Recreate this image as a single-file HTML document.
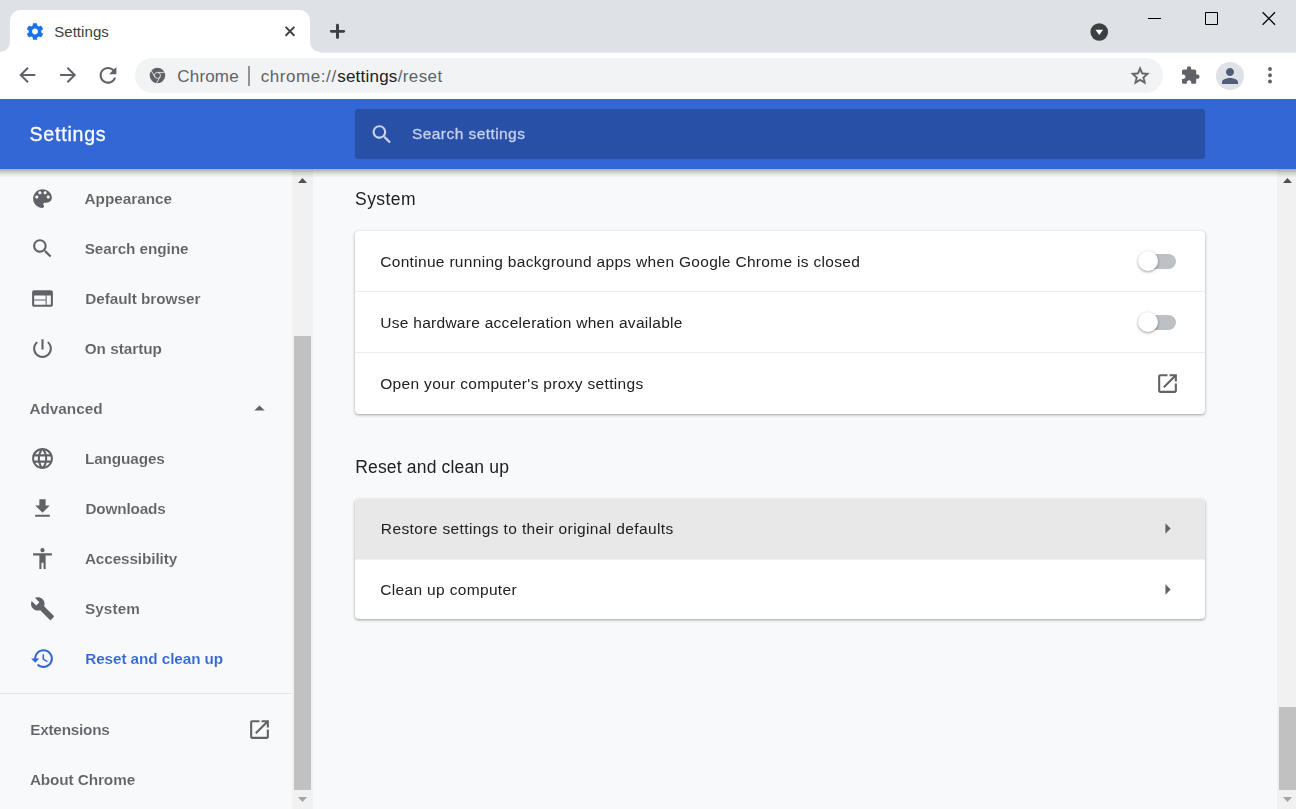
<!DOCTYPE html>
<html lang="en">
<head>
<meta charset="utf-8">
<title>Settings</title>
<style>
*{box-sizing:border-box;margin:0;padding:0}
html,body{width:1296px;height:809px;overflow:hidden;background:#f8f9fa;font-family:"Liberation Sans",sans-serif;}
body{position:relative}
.abs{position:absolute}
.t{position:absolute;white-space:nowrap;line-height:20px;height:20px}
#glayer{left:0;top:0;width:1296px;height:809px;will-change:transform;z-index:8}
svg{position:absolute;display:block;overflow:visible}

/* ---------- browser chrome ---------- */
#tabstrip{left:0;top:0;width:1296px;height:53px;background:#dee1e6;border-bottom:1px solid #eaecef}
#tab{left:10px;top:10px;width:300px;height:43px;background:#fff;border-radius:10px 10px 0 0}
.tabcurve{width:10px;height:10.600px;top:42.400px;background:#fff;overflow:hidden}
.tabcurve i{position:absolute;width:20px;height:20px;border-radius:50%;background:#dee1e6;top:-10px}
#toolbar{left:0;top:53px;width:1296px;height:46px;background:#fff}
#omnibox{left:135px;top:58px;width:1028px;height:34.5px;border-radius:17.25px;background:#f1f3f4}
#avatar{left:1216px;top:62px;width:28px;height:28px;border-radius:50%;background:#dee1e6}
.tabt{color:#3c4043;font-size:15px}
.omni1{color:#5f6368;font-size:17px}
.dk{color:#202124}

/* ---------- settings header ---------- */
#hdr{left:0;top:99px;width:1296px;height:70px;background:#3367d6;z-index:5}
#hshadow{left:-20px;top:169px;width:1336px;height:8px;box-shadow:inset 0 6.25px 7.5px -3.75px rgba(0,0,0,.4);z-index:4}
#search{left:355px;top:109px;width:850px;height:50px;border-radius:3px;background:#2850a7;z-index:6}
.hdrt{color:#fff;font-size:19.600px;z-index:7;-webkit-text-stroke:.3px #fff}
.sph{color:#c6d1f0;font-size:15.500px;z-index:7;-webkit-text-stroke:.3px #c6d1f0}

/* ---------- sidebar ---------- */
.nav{color:#5f6368;font-size:15.300px;font-weight:700;-webkit-text-stroke:.1px #f8f9fa}
.sel{color:#3367d6}
.track{background:#f1f1f1}
.thumb{background:#c1c1c1}
#navsep{left:0;top:693px;width:292px;height:1px;background:#e3e4e6}

/* ---------- main ---------- */
.card{background:#fff;border-radius:4px;box-shadow:0 1px 2px rgba(60,64,67,.3),0 1px 3px 1px rgba(60,64,67,.15)}
.h2{color:#202124;font-size:17.5px}
.row{color:#202124;font-size:15.500px}
.sep{left:355px;width:850px;height:1px;background:#ececee}
.bar{width:35px;height:15px;border-radius:7.5px;background:#bdc1c6}
.knob{width:20px;height:20px;border-radius:50%;background:#fff;box-shadow:0 1px 3px rgba(0,0,0,.4)}
#hover{left:355px;top:499px;width:850px;height:61px;background:#e8e8e8;border-radius:4px 4px 0 0;border-bottom:1px solid #f1f1f1}
</style>
</head>
<body>
<!-- tab strip -->
<div id="tabstrip" class="abs"></div>
<div id="tab" class="abs"></div>
<div class="abs tabcurve" style="left:0"><i style="left:-10px"></i></div>
<div class="abs tabcurve" style="left:310px"><i style="left:0"></i></div>

<!-- toolbar -->
<div id="toolbar" class="abs"></div>
<div id="omnibox" class="abs"></div>
<div id="avatar" class="abs"></div>
<!-- favicon gear -->
<svg style="left:25px;top:21px" width="20" height="20" viewBox="0 0 24 24" fill="#1a73e8"><g transform="translate(0 0.6)"><path d="M19.43 12.98c.04-.32.07-.64.07-.98s-.03-.66-.07-.98l2.11-1.65c.19-.15.24-.42.12-.64l-2-3.46c-.12-.22-.39-.3-.61-.22l-2.49 1c-.52-.4-1.08-.73-1.69-.98l-.38-2.65C14.46 2.18 14.25 2 14 2h-4c-.25 0-.46.18-.49.42l-.38 2.65c-.61.25-1.17.59-1.69.98l-2.49-1c-.23-.09-.49 0-.61.22l-2 3.46c-.13.22-.07.49.12.64l2.11 1.65c-.04.32-.07.65-.07.98s.03.66.07.98l-2.11 1.65c-.19.15-.24.42-.12.64l2 3.46c.12.22.39.3.61.22l2.49-1c.52.4 1.08.73 1.69.98l.38 2.65c.03.24.24.42.49.42h4c.25 0 .46-.18.49-.42l.38-2.65c.61-.25 1.17-.59 1.69-.98l2.49 1c.23.09.49 0 .61-.22l2-3.46c.12-.22.07-.49-.12-.64l-2.11-1.65zM12 15.5c-1.93 0-3.5-1.57-3.5-3.5s1.570-3.5 3.5-3.5 3.5 1.570 3.5 3.5-1.570 3.5-3.5 3.5z"/></g></svg>
<!-- tab close -->
<svg style="left:280px;top:21px" width="20" height="20" viewBox="0 0 20 20" fill="none" stroke="#3c4043" stroke-width="1.900"><g transform="translate(0 0.35)"><path d="M5.600 5.600l8.800 8.800M14.400 5.600l-8.800 8.800"/></g></svg>
<!-- new tab plus -->
<svg style="left:327px;top:21px" width="20" height="20" viewBox="0 0 20 20" fill="none" stroke="#3c4043" stroke-width="2.950" stroke-linecap="round"><g transform="translate(0.5 0.35)"><path d="M10 3.800v12.400M3.800 10h12.400"/></g></svg>
<!-- tab search dropdown -->
<svg style="left:1090px;top:23px" width="18" height="18" viewBox="0 0 18 18"><circle cx="9.250" cy="9" r="8.800" fill="#3c4043"/><path d="M5.450 6.800h7.600L9.250 12z" fill="#fff"/></svg>
<!-- window controls -->
<svg style="left:1148px;top:11px" width="130" height="16" viewBox="0 0 130 16" fill="none" stroke="#000" stroke-width="1"><path d="M0 7.500h13M57.500 1.500h12v12h-12z"/><path stroke-width="1.250" d="M114.600 1.300l12.400 12.400M127 1.300l-12.400 12.400"/></svg>

<!-- back / forward / reload -->
<svg style="left:15px;top:63px" width="24" height="24" viewBox="0 0 24 24" fill="#5f6368"><g transform="translate(0.3 0)"><path d="M20 11H7.830l5.590-5.590L12 4l-8 8 8 8 1.410-1.410L7.830 13H20v-2z"/></g></svg>
<svg style="left:56px;top:63px" width="24" height="24" viewBox="0 0 24 24" fill="#5f6368"><g transform="translate(0.1 0)"><path d="M12 4l-1.410 1.410L16.170 11H4v2h12.170l-5.580 5.590L12 20l8-8z"/></g></svg>
<svg style="left:95px;top:62px" width="25.2" height="25.2" viewBox="0 0 24 24" fill="#5f6368"><g transform="translate(0.381 0.667)"><path d="M17.650 6.350C16.200 4.900 14.210 4 12 4c-4.420 0-7.990 3.580-7.990 8s3.570 8 7.990 8c3.730 0 6.840-2.550 7.730-6h-2.080c-.82 2.330-3.040 4-5.650 4-3.310 0-6-2.690-6-6s2.690-6 6-6c1.660 0 3.140.69 4.220 1.780L13 11h7V4l-2.350 2.350z"/></g></svg>
<!-- chrome product icon -->
<svg style="left:149px;top:67px" width="15.5" height="15.5" viewBox="0 0 16 16"><g transform="translate(0.723 0.671)"><circle cx="8" cy="8" r="8" fill="#5f6368"/><circle cx="8" cy="8" r="3.100" fill="none" stroke="#f1f3f4" stroke-width=".850"/><path d="M8 4.900h7.300M5.300 9.550L1.650 3.250M10.700 9.550L7.050 15.900" stroke="#f1f3f4" stroke-width=".850" fill="none"/></g></svg>
<!-- omnibox separator -->
<div class="abs" style="left:248.150px;top:66px;width:1.700px;height:19.500px;background:#909397"></div>
<!-- star -->
<svg style="left:1129px;top:64px" width="22.2" height="22.2" viewBox="0 0 24 24" fill="#5f6368" stroke="#5f6368" stroke-width=".450"><g transform="translate(0 0.811)"><path d="M22 9.240l-7.190-.62L12 2 9.190 8.630 2 9.240l5.460 4.730L5.820 21 12 17.270 18.180 21l-1.630-7.030L22 9.240zM12 15.400l-3.760 2.270 1-4.280-3.320-2.880 4.380-.38L12 6.100l1.710 4.040 4.380.38-3.320 2.880 1 4.280L12 15.400z"/></g></svg>
<!-- extensions puzzle -->
<svg style="left:1180px;top:65px" width="20.1" height="20.1" viewBox="0 0 24 24" fill="#5f6368"><g transform="translate(0.358 0.478)"><path d="M20.500 11H19V7c0-1.100-.9-2-2-2h-4V3.500C13 2.120 11.880 1 10.500 1S8 2.120 8 3.500V5H4c-1.100 0-1.990.9-1.990 2v3.800H3.500c1.490 0 2.700 1.210 2.700 2.700s-1.210 2.700-2.700 2.700H2V20c0 1.100.9 2 2 2h3.800v-1.500c0-1.490 1.210-2.700 2.700-2.700 1.490 0 2.700 1.210 2.700 2.700V22H17c1.100 0 2-.9 2-2v-4h1.500c1.380 0 2.500-1.120 2.500-2.500S21.880 11 20.500 11z"/></g></svg>
<!-- avatar person -->
<svg style="left:1218px;top:64px" width="24" height="24" viewBox="0 0 24 24" fill="#505d78"><path d="M12 12c2.210 0 4-1.790 4-4s-1.790-4-4-4-4 1.790-4 4 1.790 4 4 4zm0 2c-2.670 0-8 1.340-8 4v2h16v-2c0-2.660-5.330-4-8-4z"/></svg>
<!-- kebab -->
<svg style="left:1267px;top:66px" width="5" height="18" viewBox="0 0 5 18" fill="#5f6368"><g transform="translate(0.6 0.2)"><circle cx="2.400" cy="2.750" r="1.950"/><circle cx="2.400" cy="9" r="1.950"/><circle cx="2.400" cy="15.250" r="1.950"/></g></svg>
<!-- settings header -->
<div id="hdr" class="abs"></div>
<div id="search" class="abs"></div>
<div id="hshadow" class="abs"></div>

<!-- sidebar scrollbar -->
<div class="abs track" style="left:292px;top:169px;width:21px;height:640px"></div>
<div class="abs thumb" style="left:294px;top:336px;width:17px;height:454px"></div>
<div id="navsep" class="abs"></div>

<!-- main scrollbar -->
<div class="abs track" style="left:1277px;top:169px;width:21px;height:640px"></div>
<div class="abs thumb" style="left:1279px;top:707px;width:17px;height:83px"></div>

<!-- cards -->
<div class="abs card" style="left:355px;top:231px;width:850px;height:183px"></div>
<div class="abs sep" style="top:291px"></div>
<div class="abs sep" style="top:352px"></div>
<div class="abs card" style="left:355px;top:499px;width:850px;height:120px"></div>
<div id="hover" class="abs"></div>

<!-- toggles -->
<div class="abs bar" style="left:1141px;top:254px"></div>
<div class="abs knob" style="left:1138px;top:251px"></div>
<div class="abs bar" style="left:1141px;top:315px"></div>
<div class="abs knob" style="left:1138px;top:312px"></div>
<!-- search icon in header -->
<svg style="left:369px;top:122px;z-index:7" width="25" height="25" viewBox="0 0 24 24" fill="#c9d4f1"><g transform="translate(0.48 0)"><path d="M15.500 14h-.79l-.28-.27C15.410 12.590 16 11.110 16 9.500 16 5.910 13.090 3 9.500 3S3 5.910 3 9.500 5.910 16 9.500 16c1.610 0 3.090-.59 4.230-1.570l.27.28v.79l5 4.990L20.490 19l-4.990-5zm-6 0C7.010 14 5 11.990 5 9.500S7.010 5 9.500 5 14 7.010 14 9.500 11.990 14 9.500 14z"/></g></svg>

<!-- sidebar icons: 25px box, centre x=42.5 -->
<svg style="left:30px;top:186px" width="25" height="25" viewBox="0 0 24 24" fill="#5f6368"><path d="M12 3c-4.970 0-9 4.030-9 9s4.030 9 9 9c.83 0 1.500-.67 1.500-1.500 0-.39-.15-.74-.39-1.010-.23-.26-.38-.61-.38-.99 0-.83.67-1.500 1.500-1.500H16c2.760 0 5-2.240 5-5 0-4.420-4.030-8-9-8zm-5.500 9c-.83 0-1.500-.67-1.500-1.500S5.670 9 6.500 9 8 9.670 8 10.500 7.330 12 6.500 12zm3-4C8.670 8 8 7.330 8 6.500S8.670 5 9.500 5s1.500.67 1.500 1.500S10.330 8 9.500 8zm5 0c-.83 0-1.500-.67-1.500-1.500S13.670 5 14.500 5s1.500.67 1.500 1.500S15.330 8 14.500 8zm3 4c-.83 0-1.500-.67-1.500-1.500S16.670 9 17.500 9s1.500.67 1.500 1.500-.67 1.500-1.500 1.500z"/></svg>
<svg style="left:30px;top:236px" width="25" height="25" viewBox="0 0 24 24" fill="#5f6368"><path d="M15.500 14h-.79l-.28-.27C15.410 12.590 16 11.110 16 9.500 16 5.910 13.090 3 9.500 3S3 5.910 3 9.500 5.910 16 9.500 16c1.610 0 3.090-.59 4.230-1.570l.27.28v.79l5 4.990L20.490 19l-4.990-5zm-6 0C7.010 14 5 11.990 5 9.500S7.010 5 9.500 5 14 7.010 14 9.500 11.990 14 9.500 14z"/></svg>
<svg style="left:30px;top:286px" width="25" height="25" viewBox="0 0 24 24" fill="#5f6368"><path d="M20 4H4c-1.100 0-1.990.9-1.990 2L2 18c0 1.100.9 2 2 2h16c1.100 0 2-.9 2-2V6c0-1.100-.9-2-2-2zm-5 14H4v-4h11v4zm0-5H4V9h11v4zm5 5h-4V9h4v9z"/></svg>
<svg style="left:30px;top:336px" width="25" height="25" viewBox="0 0 24 24" fill="#5f6368"><path d="M13 3h-2v10h2V3zm4.830 2.170l-1.420 1.420C17.990 7.860 19 9.810 19 12c0 3.870-3.130 7-7 7s-7-3.130-7-7c0-2.190 1.010-4.140 2.580-5.420L6.170 5.170C4.230 6.820 3 9.260 3 12c0 4.970 4.030 9 9 9s9-4.030 9-9c0-2.740-1.230-5.180-3.170-6.830z"/></svg>
<svg style="left:30px;top:446px" width="25" height="25" viewBox="0 0 24 24" fill="#5f6368"><path d="M11.990 2C6.470 2 2 6.480 2 12s4.470 10 9.990 10C17.520 22 22 17.520 22 12S17.520 2 11.990 2zm6.930 6h-2.950c-.32-1.250-.78-2.450-1.380-3.560 1.840.63 3.370 1.910 4.330 3.560zM12 4.040c.83 1.200 1.480 2.530 1.910 3.960h-3.820c.43-1.430 1.080-2.760 1.910-3.960zM4.260 14C4.100 13.360 4 12.690 4 12s.1-1.360.26-2h3.380c-.08.66-.14 1.320-.14 2 0 .68.06 1.340.14 2H4.260zm.82 2h2.950c.32 1.250.78 2.450 1.380 3.560-1.840-.63-3.370-1.900-4.330-3.560zm2.950-8H5.080c.96-1.660 2.490-2.930 4.330-3.560C8.810 5.550 8.350 6.750 8.030 8zM12 19.960c-.83-1.200-1.480-2.530-1.910-3.960h3.820c-.43 1.430-1.080 2.760-1.910 3.960zM14.340 14H9.660c-.09-.66-.16-1.320-.16-2 0-.68.07-1.350.16-2h4.680c.09.65.16 1.320.16 2 0 .68-.07 1.340-.16 2zm.25 5.560c.6-1.110 1.060-2.310 1.380-3.560h2.950c-.96 1.650-2.490 2.930-4.330 3.560zM16.360 14c.08-.66.14-1.320.14-2 0-.68-.06-1.340-.14-2h3.380c.16.64.26 1.310.26 2s-.1 1.360-.26 2h-3.380z"/></svg>
<svg style="left:30px;top:496px" width="25" height="25" viewBox="0 0 24 24" fill="#5f6368"><path d="M19 9h-4V3H9v6H5l7 7 7-7zM5 18v2h14v-2H5z"/></svg>
<svg style="left:30px;top:546px" width="25" height="25" viewBox="0 0 24 24" fill="#5f6368"><path d="M12 2c1.100 0 2 .9 2 2s-.9 2-2 2-2-.9-2-2 .9-2 2-2zm9 7h-6v13h-2v-6h-2v6H9V9H3V7h18v2z"/></svg>
<svg style="left:30px;top:596px" width="25" height="25" viewBox="0 0 24 24" fill="#5f6368"><path d="M22.700 19l-9.100-9.100c.9-2.300.4-5-1.500-6.900-2-2-5-2.400-7.400-1.300L9 6 6 9 1.600 4.700C.4 7.100.9 10.100 2.900 12.100c1.900 1.900 4.600 2.400 6.900 1.500l9.100 9.100c.4.4 1 .4 1.400 0l2.300-2.300c.5-.4.5-1.100.1-1.400z"/></svg>
<svg style="left:30px;top:646px" width="25" height="25" viewBox="0 0 24 24" fill="#3367d6"><path d="M13 3c-4.970 0-9 4.030-9 9H1l3.890 3.890.07.14L9 12H6c0-3.870 3.130-7 7-7s7 3.130 7 7-3.130 7-7 7c-1.930 0-3.680-.79-4.940-2.060l-1.420 1.420C8.270 19.990 10.510 21 13 21c4.970 0 9-4.030 9-9s-4.030-9-9-9zm-1 5v5l4.280 2.540.72-1.210-3.500-2.080V8H12z"/></svg>

<!-- Advanced collapse arrow -->
<svg style="left:247px;top:396px" width="25" height="25" viewBox="0 0 24 24" fill="#5f6368"><path d="M7 14l5-5 5 5z"/></svg>
<!-- Extensions open-in-new -->
<svg style="left:247px;top:717px" width="25" height="25" viewBox="0 0 24 24" fill="#5f6368"><path d="M19 19H5V5h7V3H5c-1.110 0-2 .9-2 2v14c0 1.100.89 2 2 2h14c1.100 0 2-.9 2-2v-7h-2v7zM14 3v2h3.590l-9.830 9.830 1.410 1.410L19 6.410V10h2V3h-7z"/></svg>
<!-- proxy open-in-new -->
<svg style="left:1155px;top:371px" width="25" height="25" viewBox="0 0 24 24" fill="#5f6368"><path d="M19 19H5V5h7V3H5c-1.110 0-2 .9-2 2v14c0 1.100.89 2 2 2h14c1.100 0 2-.9 2-2v-7h-2v7zM14 3v2h3.590l-9.830 9.830 1.410 1.410L19 6.410V10h2V3h-7z"/></svg>
<!-- subpage arrows -->
<svg style="left:1155px;top:516px" width="25" height="25" viewBox="0 0 24 24" fill="#5f6368"><path d="M10 17l5-5-5-5v10z"/></svg>
<svg style="left:1155px;top:577px" width="25" height="25" viewBox="0 0 24 24" fill="#5f6368"><path d="M10 17l5-5-5-5v10z"/></svg>

<!-- scrollbar buttons -->
<svg style="left:298px;top:178px" width="9" height="5" viewBox="0 0 9 5" fill="#505050"><path d="M0 5L4.500 0 9 5z"/></svg>
<svg style="left:298px;top:797px" width="9" height="5" viewBox="0 0 9 5" fill="#a3a3a3"><path d="M0 0L4.500 5 9 0z"/></svg>
<svg style="left:1283px;top:178px" width="9" height="5" viewBox="0 0 9 5" fill="#505050"><path d="M0 5L4.500 0 9 5z"/></svg>
<svg style="left:1283px;top:797px" width="9" height="5" viewBox="0 0 9 5" fill="#a3a3a3"><path d="M0 0L4.500 5 9 0z"/></svg>
<!-- text -->
<div id="tabtitle" class="t tabt" style="left:54.15px;top:22.00px;letter-spacing:0.069px">Settings</div>
<div id="omnichrome" class="t omni1" style="left:177.34px;top:67.00px;letter-spacing:0.159px">Chrome</div>
<div id="urla" class="t omni1" style="left:260.76px;top:67.00px;letter-spacing:0.564px">chrome://</div>
<div id="urlb" class="t omni1 dk" style="left:337.23px;top:67.00px;letter-spacing:0.218px">settings</div>
<div id="urlc" class="t omni1" style="left:397.63px;top:67.00px;letter-spacing:0.404px">/reset</div>
<div id="glayer" class="abs g">
<div id="hdrtitle" class="t hdrt" style="left:29.45px;top:124.00px;letter-spacing:0.772px">Settings</div>
<div id="searchph" class="t sph" style="left:411.97px;top:124.00px;letter-spacing:0.437px">Search settings</div>
<div id="n1" class="t nav" style="left:84.54px;top:189.00px;letter-spacing:-0.009px">Appearance</div>
<div id="n2" class="t nav" style="left:84.73px;top:239.00px;letter-spacing:-0.059px">Search engine</div>
<div id="n3" class="t nav" style="left:85.21px;top:289.00px;letter-spacing:-0.033px">Default browser</div>
<div id="n4" class="t nav" style="left:84.69px;top:339.00px;letter-spacing:-0.009px">On startup</div>
<div id="n5" class="t nav" style="left:29.45px;top:399.00px;letter-spacing:-0.011px">Advanced</div>
<div id="n6" class="t nav" style="left:84.95px;top:449.00px;letter-spacing:-0.104px">Languages</div>
<div id="n7" class="t nav" style="left:85.49px;top:499.00px;letter-spacing:-0.158px">Downloads</div>
<div id="n8" class="t nav" style="left:84.89px;top:549.00px;letter-spacing:-0.098px">Accessibility</div>
<div id="n9" class="t nav" style="left:84.98px;top:599.00px;letter-spacing:0.093px">System</div>
<div id="n10" class="t nav sel" style="left:85.21px;top:649.00px;letter-spacing:-0.083px">Reset and clean up</div>
<div id="n11" class="t nav" style="left:30.21px;top:720.00px;letter-spacing:-0.217px">Extensions</div>
<div id="n12" class="t nav" style="left:29.89px;top:770.00px;letter-spacing:-0.086px">About Chrome</div>
<div id="h1" class="t h2" style="left:355.06px;top:189.00px;letter-spacing:0.435px">System</div>
<div id="r1" class="t row" style="left:380.25px;top:252.00px;letter-spacing:0.309px">Continue running background apps when Google Chrome is closed</div>
<div id="r2" class="t row" style="left:380.28px;top:313.00px;letter-spacing:0.279px">Use hardware acceleration when available</div>
<div id="r3" class="t row" style="left:380.22px;top:374.00px;letter-spacing:0.324px">Open your computer's proxy settings</div>
<div id="h2" class="t h2" style="left:355.25px;top:457.00px;letter-spacing:0.168px">Reset and clean up</div>
<div id="r4" class="t row" style="left:380.86px;top:519.00px;letter-spacing:0.375px">Restore settings to their original defaults</div>
<div id="r5" class="t row" style="left:380.25px;top:580.00px;letter-spacing:0.339px">Clean up computer</div>
</div>
</body>
</html>
